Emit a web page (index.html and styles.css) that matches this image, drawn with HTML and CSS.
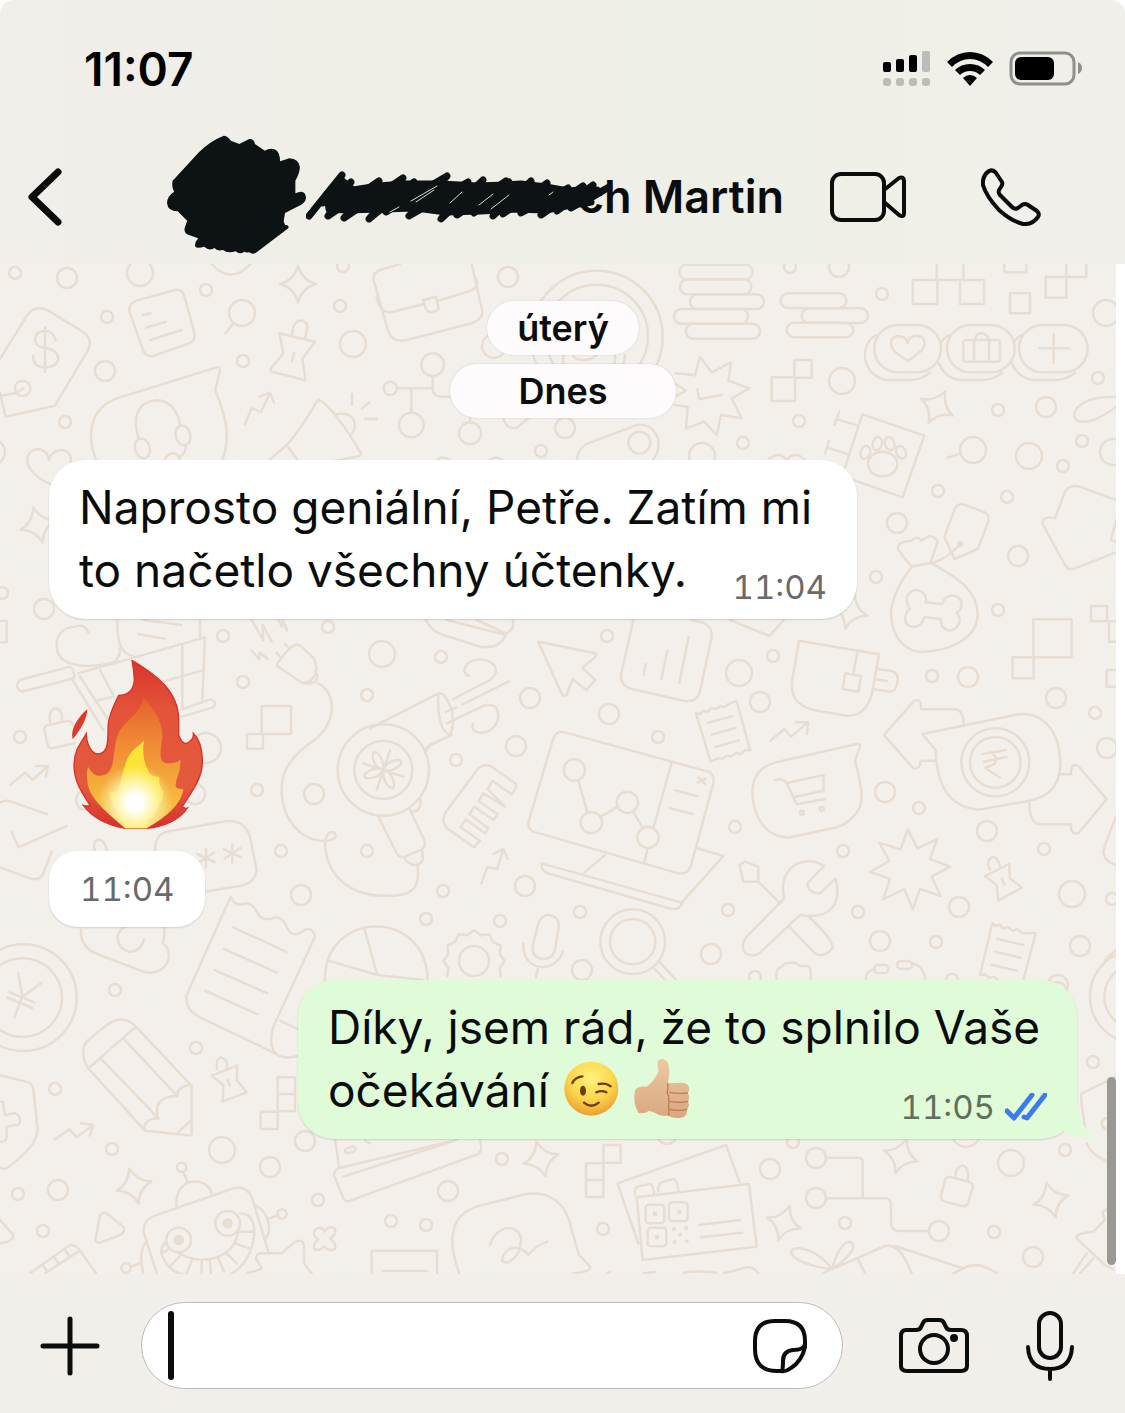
FILE: index.html
```
<!DOCTYPE html>
<html lang="cs">
<head>
    <meta charset="UTF-8">
    <meta name="viewport" content="width=device-width, initial-scale=1.0">
    <title>Chat - Martin</title>
    <link rel="stylesheet" href="styles.css">
</head>
<body>
    <header class="header">
        <div class="status-bar">
            <time class="clock">11:07</time>
            <div class="status-icons">
                <svg width="48" height="36" viewBox="0 0 48 36" aria-label="Signal">
                    <g fill="#000">
                        <rect x="0" y="11" width="8" height="10" rx="2"/>
                        <rect x="13" y="8" width="8" height="13" rx="2"/>
                        <rect x="26" y="4" width="8" height="17" rx="2"/>
                    </g>
                    <g fill="#bcbdb6">
                        <rect x="39" y="0" width="8" height="21" rx="2"/>
                        <rect x="0" y="27" width="8" height="8" rx="3"/>
                        <rect x="13" y="27" width="8" height="8" rx="3"/>
                        <rect x="26" y="27" width="8" height="8" rx="3"/>
                        <rect x="39" y="27" width="8" height="8" rx="3"/>
                    </g>
                </svg>
                <svg width="46" height="34" viewBox="0 0 46 34" aria-label="Wi-Fi">
                    <path d="M0 10Q10 0 23 0T46 10L41 15Q33 7 23 7T5 15ZM8 18Q14 12 23 12T38 18L33 23Q29 19 23 19T13 23ZM16 26Q19 23 23 23T30 26L23 34Z"/>
                </svg>
                <svg width="74" height="36" viewBox="0 0 74 36" aria-label="Battery">
                    <rect x="2" y="2" width="63" height="31" rx="9" fill="none" stroke="#8f908a" stroke-width="3"/>
                    <rect x="6" y="6" width="39" height="23" rx="6"/>
                    <path d="M69 11Q73 13 73 17T69 23Z" fill="#8f908a"/>
                </svg>
            </div>
        </div>
        <nav class="nav-bar">
            <button class="icon-button" aria-label="Zpět">
                <svg width="34" height="58" viewBox="0 0 34 58" class="icon thick"><path d="M30 4L4 29L30 54"/></svg>
            </button>
            <div class="contact">
                <svg class="avatar" width="139" height="119" viewBox="470 403 392 357" preserveAspectRatio="none" aria-hidden="true">
                    <path d="M486 540L560 455Q590 422 630 405Q640 405 650 420L674 430L702 415Q716 414 718 430L746 450Q760 440 776 447Q789 456 789 482L815 473Q842 474 845 500Q843 522 832 540V578Q860 563 862 592Q860 608 840 617L803 637L799 662L803 673Q816 672 812 683L720 757Q710 762 702 755Q690 756 688 753Q675 763 664 752Q640 759 628 748Q610 752 604 742Q590 752 575 738Q555 744 550 738Q546 728 558 713L530 702Q514 695 522 675L527 660L500 632Q472 632 470 607Q470 587 490 573Q482 560 486 540Z" fill="#0d1214"/>
                </svg>
                <div class="name-box">
                    <h1 class="name">ch Martin</h1>
                    <svg class="scribble" width="308" height="52" viewBox="305 173 308 52" aria-hidden="true">
                        <path d="M326 196L340 182L352 192L378 188L402 186L440 186L476 188L505 187L520 186L545 189L567 193L580 192L596 192L570 207L545 212L512 211L480 213L445 214L415 210L380 211L345 212L328 211Z" fill="#0d1214"/>
                        <path d="M308 218L341 177L322 205L350 184L327 218L378 183L343 220L402 180L368 221L413 184L385 214L446 178L408 218L467 184L440 221L482 182L456 217L505 183L473 215L508 184L492 218L530 183L502 216L546 185L520 215L567 190L540 217L582 188L556 213L592 187L570 210L608 189L580 206L590 204"/>
                        <path d="M384 193V214M516 193V214" stroke-linecap="butt" stroke-width="6"/>
                        <path class="gaps" d="M436 188L410 203M433 192L415 204M461 194L449 205M492 196L478 207M508 197L490 211M398 209L389 214M552 194L548 197"/>
                    </svg>
                </div>
            </div>
            <button class="icon-button video" aria-label="Videohovor">
                <svg width="76" height="50" viewBox="0 0 76 50" class="icon">
                    <rect x="2" y="2" width="52" height="46" rx="9"/>
                    <path d="M54 18L69 6Q74 4 74 9V41Q74 46 69 43L54 30"/>
                </svg>
            </button>
            <button class="icon-button" aria-label="Hovor">
                <svg width="60" height="58" viewBox="0 0 60 58" class="icon">
                    <path d="M8 3Q12 1 15 5L21 14Q22 16 20 19L18 22Q17 25 19 27L31 39Q34 42 37 40L41 37Q44 35 47 37L56 43Q59 46 57 49Q51 57 42 56Q30 53 18 42Q5 28 2 17Q1 8 8 3Z"/>
                </svg>
            </button>
        </nav>
    </header>

    <main class="chat">
        <svg class="wallpaper" viewBox="0 264 1116 1010" preserveAspectRatio="xMidYMin slice" aria-hidden="true">
            <defs>
                <path id="sparkle" d="M0-18Q5-3 18 0Q4 4 0 18Q-4 4-18 0Q-5-3 0-18Z"/>
                <path id="asterisk" d="M0-28V28M-26-12L26 12M-24 16L24-16"/>
            </defs>
            <!-- small dots -->
            <g>
                <circle cx="15" cy="273" r="6"/><circle cx="206" cy="290" r="6"/><circle cx="107" cy="317" r="6"/><circle cx="243" cy="361" r="6"/>
                <circle cx="340" cy="306" r="6"/><circle cx="65" cy="422" r="6"/><circle cx="2" cy="593" r="6"/><circle cx="328" cy="627" r="6"/>
                <circle cx="343" cy="266" r="6"/><circle cx="541" cy="451" r="6"/><circle cx="743" cy="443" r="6"/><circle cx="607" cy="636" r="6"/>
                <circle cx="790" cy="267" r="6"/><circle cx="882" cy="294" r="6"/><circle cx="799" cy="421" r="6"/><circle cx="998" cy="410" r="6"/>
                <circle cx="1082" cy="441" r="6"/><circle cx="1063" cy="466" r="6"/><circle cx="1098" cy="378" r="6"/><circle cx="938" cy="491" r="6"/>
                <circle cx="1007" cy="497" r="6"/><circle cx="876" cy="577" r="6"/><circle cx="998" cy="610" r="6"/>
                <circle cx="223" cy="636" r="6"/><circle cx="243" cy="682" r="6"/><circle cx="20" cy="737" r="6"/><circle cx="257" cy="790" r="6"/>
                <circle cx="281" cy="851" r="6"/><circle cx="367" cy="695" r="6"/><circle cx="367" cy="851" r="6"/><circle cx="441" cy="657" r="6"/>
                <circle cx="456" cy="760" r="6"/><circle cx="658" cy="737" r="6"/><circle cx="735" cy="827" r="6"/><circle cx="443" cy="891" r="6"/>
                <circle cx="426" cy="919" r="6"/><circle cx="500" cy="921" r="6"/><circle cx="580" cy="912" r="6"/><circle cx="728" cy="910" r="6"/>
                <circle cx="773" cy="656" r="6"/><circle cx="932" cy="676" r="6"/><circle cx="1095" cy="713" r="6"/><circle cx="919" cy="808" r="6"/>
                <circle cx="843" cy="851" r="6"/><circle cx="1044" cy="849" r="6"/><circle cx="858" cy="912" r="6"/><circle cx="936" cy="942" r="6"/>
                <circle cx="1112" cy="899" r="6"/><circle cx="115" cy="990" r="6"/><circle cx="196" cy="1048" r="6"/><circle cx="55" cy="1089" r="6"/>
                <circle cx="112" cy="1149" r="6"/><circle cx="18" cy="1194" r="6"/><circle cx="43" cy="1231" r="6"/><circle cx="318" cy="1200" r="6"/>
                <circle cx="502" cy="1159" r="6"/><circle cx="391" cy="1221" r="6"/><circle cx="426" cy="1225" r="6"/><circle cx="603" cy="1229" r="6"/>
                <circle cx="755" cy="977" r="6"/><circle cx="952" cy="980" r="6"/><circle cx="1093" cy="1062" r="6"/><circle cx="1065" cy="1150" r="6"/>
                <circle cx="845" cy="1223" r="6"/><circle cx="994" cy="1232" r="6"/><circle cx="793" cy="1142" r="6"/>
            </g>
            <!-- medium dots -->
            <g>
                <circle cx="67" cy="278" r="10"/><circle cx="105" cy="371" r="10"/><circle cx="44" cy="609" r="10"/><circle cx="508" cy="277" r="10"/>
                <circle cx="494" cy="346" r="12"/><circle cx="565" cy="428" r="10"/><circle cx="839" cy="267" r="10"/><circle cx="1046" cy="407" r="10"/>
                <circle cx="897" cy="523" r="10"/><circle cx="1018" cy="556" r="10"/><circle cx="314" cy="794" r="10"/><circle cx="301" cy="895" r="10"/>
                <circle cx="195" cy="794" r="10"/><circle cx="86" cy="800" r="10"/><circle cx="530" cy="698" r="10"/><circle cx="609" cy="714" r="10"/>
                <circle cx="516" cy="746" r="10"/><circle cx="525" cy="886" r="10"/><circle cx="711" cy="954" r="10"/><circle cx="760" cy="702" r="10"/>
                <circle cx="968" cy="677" r="10"/><circle cx="1056" cy="698" r="10"/><circle cx="1107" cy="748" r="10"/><circle cx="885" cy="792" r="10"/>
                <circle cx="987" cy="831" r="10"/><circle cx="959" cy="907" r="10"/><circle cx="880" cy="941" r="10"/><circle cx="1080" cy="946" r="10"/>
                <circle cx="58" cy="1190" r="10"/><circle cx="305" cy="1141" r="10"/><circle cx="270" cy="1167" r="10"/><circle cx="582" cy="970" r="10"/>
                <circle cx="448" cy="1191" r="10"/><circle cx="667" cy="1134" r="10"/><circle cx="1058" cy="985" r="10"/><circle cx="770" cy="1169" r="10"/>
                <circle cx="816" cy="1158" r="10"/><circle cx="816" cy="1198" r="10"/><circle cx="939" cy="1231" r="10"/><circle cx="1033" cy="1257" r="10"/>
            </g>
            <!-- large dots -->
            <g>
                <circle cx="140" cy="273" r="13"/><circle cx="242" cy="313" r="13"/><circle cx="353" cy="344" r="13"/><circle cx="-8" cy="452" r="13"/>
                <circle cx="702" cy="456" r="13"/><circle cx="842" cy="381" r="13"/><circle cx="973" cy="450" r="13"/><circle cx="1029" cy="456" r="13"/>
                <circle cx="1106" cy="313" r="13"/><circle cx="1113" cy="452" r="13"/><circle cx="206" cy="748" r="15"/><circle cx="382" cy="654" r="13"/>
                <circle cx="739" cy="673" r="13"/><circle cx="1072" cy="894" r="13"/><circle cx="222" cy="1150" r="13"/><circle cx="1011" cy="1163" r="13"/>
                <circle cx="966" cy="1133" r="14"/>
            </g>
            <g>
                <use href="#sparkle" x="298" y="284"/>
                <use href="#sparkle" transform="translate(38 525) rotate(-15)"/>
                <use href="#sparkle" transform="translate(937 407) rotate(28)"/>
                <use href="#sparkle" transform="translate(850 611) rotate(15)"/>
                <use href="#sparkle" transform="translate(134 1186) rotate(-15)"/>
                <use href="#sparkle" transform="translate(541 1159) rotate(-15)"/>
                <use href="#sparkle" transform="translate(784 1223) rotate(18)"/>
                <use href="#sparkle" transform="translate(901 1156) rotate(18)"/>
                <use href="#sparkle" transform="translate(1051 1200) rotate(-15)"/>
            </g>
            <!-- price tag, note, pin, headset, megaphone -->
            <g class="doodle" transform="translate(0 260) scale(.33333)">
                <path d="M0 297L82 165Q108 132 145 152L245 213Q282 235 263 272L165 437L17 470L0 400M0 408L50 398L70 385"/>
                <circle cx="68" cy="385" r="23"/>
                <path d="M135 202V335M167 240Q158 212 135 212Q105 214 105 240Q106 260 135 264Q175 270 175 297Q170 322 135 322Q100 322 99 288"/>
                <path d="M410 122L525 90Q545 87 552 105L583 218Q588 240 568 250L462 287Q438 293 430 272L388 155Q385 130 410 122ZM428 165L452 160M438 203L497 186M450 240L545 210"/>
                <path d="M702 188L676 220M838 220L945 245L907 297L916 358Q914 362 905 358L815 335Q808 330 815 322L850 280ZM876 228L880 200Q890 178 908 182Q925 190 922 205L915 235M882 278L876 304"/>
                <path d="M734 494L755 445L783 456L810 398M780 410L810 398L822 428"/>
                <path d="M288 600C260 530 265 440 360 412L650 322Q660 320 660 332L646 388C665 450 700 510 667 600"/>
                <path d="M415 532C395 470 415 425 470 421C510 422 535 455 540 495M557 560Q558 580 540 590M495 600Q500 580 520 580Q535 582 540 598"/>
                <ellipse cx="427" cy="565" rx="22" ry="30" transform="rotate(-15 427 565)"/>
                <ellipse cx="549" cy="526" rx="22" ry="30" transform="rotate(-15 549 526)"/>
                <path d="M808 600L860 555Q900 510 955 418Q1000 440 1083 580Q1083 590 1070 590L1000 603M860 555L893 600M1010 462Q1060 455 1065 495Q1063 520 1050 525M1056 402V434M1086 445L1108 427M1095 476H1128"/>
                <path d="M150 672C100 650 65 610 90 577C115 555 145 575 147 600C155 565 200 560 212 590V605M635 12Q693 76 752 12M0 1083H20V1147H0"/>
            </g>
            <!-- briefcase, coin, books, nodes, burst, key -->
            <g class="doodle" transform="translate(370 260) scale(.33333)">
                <path d="M90 12L30 30Q5 40 12 65L55 215Q70 250 110 240L305 190Q345 175 335 145L305 12M20 110Q30 165 70 155L160 132M205 122L295 95Q325 85 320 60M160 120L198 110L206 145Q200 155 182 157Q165 155 160 120Z"/>
                <circle cx="680" cy="230" r="198"/><circle cx="680" cy="228" r="154"/>
                <path d="M580 285V315M610 290Q620 300 640 300Q665 300 680 285M735 285V315M765 285L760 315"/>
                <rect x="928" y="14" width="220" height="44" rx="22"/><rect x="930" y="58" width="214" height="45" rx="22"/>
                <rect x="960" y="103" width="222" height="44" rx="22"/><rect x="912" y="147" width="222" height="44" rx="22"/>
                <rect x="948" y="191" width="222" height="45" rx="22"/>
                <circle cx="188" cy="314" r="34"/><circle cx="61" cy="385" r="20"/><circle cx="124" cy="495" r="37"/><circle cx="300" cy="520" r="33"/>
                <path d="M82 385H188M124 390V458M188 350V385Q188 410 215 410H245M300 470V487M0 478H20"/>
                <path d="M918 340L975 346L990 290L1025 337L1083 307L1075 362L1138 385L1085 415L1115 475L1053 465L1040 525L1003 485L948 505L953 440L915 435M918 372L948 392L915 410M982 387L988 418L1056 404"/>
                <path d="M620 600Q625 560 660 548L800 495Q850 490 865 540Q868 580 848 600M400 475Q410 510 440 503L475 475M200 600Q218 585 238 600M360 600Q378 585 396 600"/>
                <circle cx="808" cy="548" r="33"/>
            </g>
            <!-- pills, squares, coins, paw sign, bone bag, glove -->
            <g class="doodle" transform="translate(745 260) scale(.33333)">
                <rect x="107" y="100" width="197" height="44" rx="22"/><rect x="170" y="145" width="199" height="44" rx="22"/><rect x="125" y="188" width="200" height="44" rx="22"/>
                <path d="M503 60H577V132H503ZM645 60H717V132H645ZM577 60H645M575 12V60M655 12V60M795 100H855V160H795ZM902 51H964V113H902ZM964 51V12M964 51H1024V12M778 12V37H844V12M80 352H150V423H80ZM148 300H200V353H148Z"/>
                <rect x="388" y="195" width="200" height="142" rx="71"/><rect x="606" y="195" width="203" height="142" rx="71"/><rect x="822" y="195" width="206" height="142" rx="71"/>
                <path d="M395 225C340 250 350 350 425 360H500Q530 358 555 338M582 310Q600 355 645 360H715Q745 358 772 338M590 245Q598 232 612 225M800 310Q820 355 865 360H935Q965 358 990 338M808 245Q816 232 830 225"/>
                <path d="M488 303C450 278 432 265 440 240C455 220 485 228 488 250C492 225 525 220 537 240C545 265 525 278 488 303Z"/>
                <rect x="655" y="240" width="110" height="65" rx="8"/>
                <path d="M687 240V305M732 240V305M690 240Q692 220 710 220Q728 222 730 240M926 222V308M883 265H970"/>
                <path d="M325 660L473 712L538 527L352 463L300 622M268 495L283 456M276 478L340 497M240 580L252 542M246 562L310 583M648 580L608 593"/>
                <ellipse cx="413" cy="612" rx="44" ry="37"/><ellipse cx="361" cy="577" rx="14" ry="20" transform="rotate(20 361 577)"/><ellipse cx="397" cy="551" rx="14" ry="20" transform="rotate(15 397 551)"/>
                <ellipse cx="434" cy="551" rx="14" ry="20" transform="rotate(-15 434 551)"/><ellipse cx="468" cy="577" rx="14" ry="20" transform="rotate(-25 468 577)"/>
                <path d="M70 600Q100 570 125 600Q150 570 180 600M1113 410Q1030 410 1000 440Q975 470 1000 483Q1040 495 1113 440"/>
                <path d="M1113 720L1010 682Q975 670 960 695L930 775Q895 765 892 790L960 915Q970 932 990 925L1113 877M1113 780L1098 840L1113 846"/>
                <path d="M630 745Q640 728 660 735L715 755Q735 765 730 785L698 867L628 897L598 830ZM560 910Q610 895 645 852"/>
                <circle cx="646" cy="852" r="6"/>
                <path d="M500 920L460 870Q452 845 500 842Q515 825 530 842Q560 815 578 845L557 908L500 920Q440 1000 438 1060C440 1150 500 1180 540 1175C640 1170 700 1120 698 1060C695 990 640 955 557 908"/>
                <path d="M542 1027L592 1032C600 995 650 1000 650 1035Q650 1050 635 1058Q650 1080 640 1095C620 1125 585 1110 588 1077L538 1072C530 1110 480 1110 480 1075Q482 1055 495 1047Q478 1020 490 1003C515 975 550 1000 542 1027Z"/>
                <path d="M865 1078H980V1192H865ZM803 1192H866V1255H803ZM1038 1038H1086V1084H1038ZM1088 1084H1113M1092 1088V1145H1113M1113 1230H1085V1280H1113M0 1098L73 1128L117 1080"/>
            </g>
            <!-- shopping cart, plug, lock, password -->
            <g class="doodle" transform="translate(0 620) scale(.33333)">
                <path d="M60 180L210 140Q225 150 222 175L65 215Q40 202 60 180ZM235 160L615 52L607 240M547 75V265M300 150L340 225M480 187L605 152M285 243L340 230M215 175L310 330M240 170L325 300M545 268L630 238Q655 245 640 262L545 290"/>
                <path d="M265 38Q255 10 225 20C170 20 150 85 190 120C240 150 320 135 345 125Q365 100 358 85M352 0C350 70 365 105 400 108M415 43L495 56M430 0L545 15M600 0V50"/>
                <path d="M755 0L790 60L788 15L815 65M835 0L845 20L848 0L862 32M755 92L778 118V97L802 116"/>
                <path d="M875 80Q890 68 905 80L942 115Q955 150 945 165Q930 190 905 188L832 138Q830 125 875 80ZM830 98L845 115M855 72L870 88M945 155Q960 165 945 185Q925 195 910 188"/>
                <path d="M952 188C1010 220 1010 300 950 355C840 430 845 480 845 520C850 600 900 660 970 663Q1015 660 1005 640Q985 625 975 663C975 760 1040 820 1140 827"/>
                <path d="M785 258H873V342H785ZM741 342H789V386H741ZM225 370L155 385Q145 385 143 375L133 330Q133 317 145 315L205 302Q217 303 219 315M150 305Q145 265 170 265Q190 275 185 300"/>
                <path d="M32 494L75 458L98 480L143 438M108 438H143L138 470M0 548Q15 538 35 545L142 583M35 635L55 682L200 618M0 742L90 775Q120 785 130 760L155 695"/>
                <path d="M465 690Q465 645 500 635L680 603Q735 600 750 650L770 750Q765 790 720 798L610 815M285 695Q275 660 300 658Q315 665 320 690"/>
                <use href="#asterisk" x="618" y="714"/><use href="#asterisk" x="697" y="700"/>
            </g>
            <!-- hair dryer, cursor, chart, comb, monitor -->
            <g class="doodle" transform="translate(370 620) scale(.33333)">
                <circle cx="40" cy="450" r="137"/><circle cx="40" cy="450" r="87"/>
                <path d="M0 325L205 220Q225 215 245 270Q255 320 240 345M205 220Q200 320 235 342M165 400Q168 385 180 375L245 345"/>
                <path d="M250 237L360 180Q385 160 375 140C360 110 290 110 283 150Q285 165 297 168M278 253L417 184M230 310L340 258Q385 245 385 290C380 340 320 350 308 325V312M228 275L260 262"/>
                <ellipse cx="68" cy="436" rx="28" ry="12" transform="rotate(-25 68 436)"/><ellipse cx="24" cy="422" rx="28" ry="12" transform="rotate(65 24 422)"/>
                <ellipse cx="10" cy="460" rx="28" ry="12" transform="rotate(-20 10 460)"/><ellipse cx="56" cy="478" rx="28" ry="12" transform="rotate(65 56 478)"/>
                <path d="M60 392L20 510M-20 430L100 470"/>
                <path d="M25 590L80 700Q90 715 105 710L155 688Q168 680 163 660L120 570Q150 585 152 540M103 715Q125 745 150 730Q165 720 155 688M143 740C150 800 130 825 70 827L0 826"/>
                <path d="M505 65L675 100Q682 105 675 112L637 143L675 180L650 210L607 178L590 225Q582 230 575 222Z"/>
                <path d="M790 0L753 165Q750 195 785 207L945 243Q980 248 990 215L1025 50Q1028 20 1000 8L965 0M827 133L821 165M892 92L874 177M956 50L928 188"/>
                <path d="M168 0Q185 35 220 45L330 80Q385 90 408 45L230 0M320 0L408 40Q435 30 428 0M1080 0L1140 25"/>
                <path d="M312 682L235 628Q210 605 228 575L325 445Q345 430 365 440L438 492Q442 500 425 523L368 483L353 507L405 560L340 520L326 543L383 583L370 600L313 560L298 583L355 625L345 640L287 598L272 622L330 662Z"/>
                <path d="M334 790L352 741L382 747L400 687M370 702L400 687L413 716"/>
                <path d="M550 355Q560 330 585 337L1015 455Q1035 465 1030 490L962 740Q950 765 925 760L490 635Q470 625 477 600ZM905 428L852 618M833 685L823 728M625 482L652 577M693 590L740 562M790 577L818 622M915 511L983 529M900 565L968 582M985 473L1005 492M983 488L1006 476"/>
                <circle cx="613" cy="450" r="32"/><circle cx="664" cy="608" r="32"/><circle cx="772" cy="547" r="32"/><circle cx="834" cy="652" r="32"/>
                <path d="M980 684L1060 708L935 848L515 730Q512 755 540 762L905 867Q930 868 938 848M705 705L643 758"/>
                <path d="M1022 425L978 280L990 282L1000 272L1012 275L1024 265L1038 267L1050 258L1064 261L1076 251L1100 243L1140 390L1126 391L1112 402L1098 399L1084 409L1070 407L1058 417L1044 415ZM1015 308L1086 289M1025 344L1096 324M1036 381L1106 361"/>
                <path d="M505 910Q515 885 535 885Q570 890 566 920L555 990Q545 1020 515 1017Q485 1010 488 980Z"/>
            </g>
            <!-- cup, cart bubble, rupee, burst, wrench -->
            <g class="doodle" transform="translate(745 620) scale(.33333)">
                <path d="M162 62L402 103L380 225Q360 290 305 287L205 270Q130 250 142 180ZM337 97L325 162M300 160L348 168L340 215L293 207ZM398 148L440 153Q460 160 458 180Q455 215 435 215L388 208M392 178L425 183"/>
                <path d="M76 362L118 327L138 350L188 307M153 307H190L185 342"/>
                <path d="M345 380L330 422C345 480 360 540 340 570Q315 610 275 622L130 653C60 650 25 590 22 520C22 450 65 435 100 425L335 372Q345 370 345 380ZM90 480Q115 472 125 490L155 553L240 537M130 488L236 465V512L145 532"/>
                <circle cx="171" cy="578" r="6"/><circle cx="230" cy="566" r="6"/>
                <path d="M572 422H527Q525 450 505 445L417 345L508 242Q530 235 528 268H630Q655 270 656 310"/>
                <path d="M532 342L820 283C900 275 945 340 946 430C945 500 910 530 850 543L700 569C600 560 575 480 572 390ZM946 463H978Q978 425 1000 438L1085 538L1000 640Q975 645 978 613H885Q852 610 853 543"/>
                <circle cx="751" cy="427" r="102"/><circle cx="751" cy="427" r="76"/>
                <path d="M712 402L782 390M717 425L785 410M740 397Q775 430 720 443L765 473"/>
                <path d="M488 628L518 685L577 657L555 717L615 740L560 770L587 828L525 807L503 868L478 807L415 838L435 776L375 756L433 723L403 668L467 688Z"/>
                <path d="M720 768L792 732L795 775L830 803L760 842L755 795ZM735 750Q720 720 745 710Q760 715 765 742M770 776L778 793"/>
                <path d="M237 738C180 700 95 740 118 835L5 950Q-15 975 0 998Q25 1015 45 998L165 885C260 900 290 850 272 776L225 820Q190 820 187 790ZM130 918L210 1000Q240 1015 262 985Q270 965 190 888M0 725L40 740V785L103 848M40 785H-5L-17 735L0 725"/>
                <path d="M705 1065L742 910L752 918L764 914L774 926L790 922L802 932L818 928L832 940L872 940L835 1080M705 1065L720 1062L732 1074L746 1070L760 1080M757 957L835 975M750 995L828 1013M740 1034L815 1052M1113 590Q1080 670 1075 695Q1078 725 1113 735M1080 1020L1113 990"/>
            </g>
            <!-- coin, big receipt, pencil, shield, robot -->
            <g class="doodle" transform="translate(0 930) scale(.33333)">
                <path d="M243 0C240 45 270 65 300 75L430 125C490 140 520 90 500 50L487 38Q495 20 492-10M432 30Q420 65 390 65Q355 60 352 20Q360-10 390-15"/>
                <circle cx="70" cy="203" r="160"/><circle cx="68" cy="203" r="118"/>
                <path d="M55 130L67 200L125 158M67 200L43 262M22 203L97 234M30 187L103 217"/>
                <path d="M830 372L600 262Q555 240 560 195L692-100Q705-70 730-78T770-55T815-35T860-10T905 5T945 20L820 290Q805 340 825 370Q850 390 893 378M840 272L893 297M700-8L858 65M672 57L830 128M644 120L802 190M615 182L773 253"/>
                <path d="M975 152C970-60 1280-70 1283 152M1092-8L1132 135L985 92M1132 135L1270 150"/>
                <path d="M250 370Q245 350 265 330L320 285Q370 250 408 290L575 468V610Q575 618 565 616L435 602L265 415Q250 395 250 370ZM265 415L408 290M305 388L475 565M370 325L532 498M432 598Q435 565 475 565Q455 500 532 498Q530 470 570 465M528 612L575 570"/>
                <path d="M0 436L80 455Q98 460 100 480L113 600Q110 650 20 715Q10 718 0 712M0 515L8 515L15 555L45 550Q60 555 60 572Q60 585 45 585L20 590V620Q20 635 0 635"/>
                <path d="M635 437L712 407L710 450L740 487L668 515L670 465ZM652 418Q645 385 665 382Q685 390 680 412M683 450L690 468M833 442H885V544H833ZM833 492H885M782 545H833V597H782Z"/>
                <path d="M162 630L208 598L230 622L280 585M243 580L280 585L270 617"/>
                <circle cx="545" cy="712" r="14"/><circle cx="846" cy="852" r="14"/><circle cx="378" cy="1014" r="14"/>
                <circle cx="536" cy="930" r="37"/><circle cx="536" cy="930" r="12" class="solid"/><circle cx="683" cy="880" r="37"/><circle cx="683" cy="880" r="12" class="solid"/>
                <path d="M550 727L563 757M530 830C520 740 620 735 635 790M470 1030L432 910Q425 870 465 857L700 775Q735 765 755 800L805 965M765 825Q810 850 807 905Q800 925 795 928M807 865L835 855M435 940Q415 970 430 1030M392 1010L420 1000"/>
                <path d="M495 938Q475 965 490 985Q510 1030 560 1035M690 1035C750 1000 770 930 760 880Q750 850 720 850M535 968C600 1010 700 990 715 905M510 955L485 970M545 972L512 1008M578 985L560 1030M605 993V1030M630 993L633 1030M655 985L672 1025M680 970L710 1000M705 940L748 955M715 905H760"/>
                <path d="M300 855Q315 840 330 858L370 890Q378 905 360 915L300 938Q283 938 287 925ZM90 1030L205 948Q220 940 235 955L288 1030M135 1030L235 965M195 960L207 977M163 983L175 1000M130 1008L142 1025M0 870L40 915Q40 935 0 940"/>
                <path d="M740 1030Q780 1020 785 1015L768 985Q770 970 785 970L845 970L885 935Q912 925 912 950L912 1000L935 1030M945 900Q965 885 973 905Q985 885 1005 895Q1010 915 990 925Q1010 940 1005 957Q985 965 973 948Q960 965 942 957Q940 940 955 928Q935 915 945 900Z"/>
                <path d="M1005 630L1017 708M1110 640L1095 632M1040 655L1062 648Q1072 655 1062 665L1040 670Q1030 662 1040 655ZM1370 630L1015 715Q1002 722 1002 735L1030 805Q1035 818 1050 812L1435 672Q1450 660 1440 630M1030 740L1370 630M1115 1030V962H1311V1030M1147 1023H1282"/>
            </g>
            <!-- gear, mic, magnifier, speech, business cards -->
            <g class="doodle" transform="translate(370 930) scale(.33333)">
                <path d="M232 139L235 114L220 93L235 72L232 47L255 36L266 13L291 16L312 1L333 16L358 13L369 36L392 47L389 72L404 93L389 114L392 139"/>
                <circle cx="312" cy="93" r="45"/>
                <path d="M460 40C455 130 560 130 578 65M503 118L498 142M852 115L885 150M870 97L918 150"/>
                <circle cx="788" cy="35" r="97"/><circle cx="788" cy="35" r="68"/>
                <path d="M700 645H752V698H700ZM648 700H700V801H648ZM648 750H700"/>
                <path d="M268 1030C230 930 240 850 330 827L465 793C540 780 590 820 605 900L627 975L660 1010Q665 1025 610 1030M360 945C380 880 450 880 453 930C450 1000 390 1010 397 985C410 945 450 945 475 975Q500 945 532 935"/>
                <path d="M805 940L742 760L1068 645L1110 760M800 802L1137 762L1160 950L818 990ZM795 795Q790 770 810 768L840 762Q850 765 852 790M865 785Q862 760 880 755L910 747Q920 748 925 780M987 885L1110 870M992 922L1117 908"/>
                <rect x="827" y="824" width="56" height="56" rx="10"/><rect x="897" y="817" width="56" height="56" rx="10"/><rect x="833" y="893" width="56" height="56" rx="10"/>
                <path class="solid" d="M852 848H858V854H852ZM925 842H931V848H925ZM858 919H864V925H858ZM910 895H914V899H910ZM947 892H951V896H947ZM929 912H933V916H929ZM912 934H916V938H912ZM948 932H952V936H948Z"/>
                <path d="M710 1030L720 1026M820 1030L855 1026M940 1030Q960 1020 1040 1028M1062 1030L1130 1012Q1150 1010 1165 1030"/>
            </g>
            <!-- circuit, lock, gift bow, push pin -->
            <g class="doodle" transform="translate(745 930) scale(.33333)">
                <path d="M95 148Q90 115 110 110L120 100L150 98L165 108H190Q200 115 197 148M362 148Q365 118 390 118M500 100Q535 105 540 148"/>
                <rect x="387" y="105" width="43" height="24" rx="12"/><rect x="456" y="93" width="45" height="24" rx="12"/>
                <circle cx="1175" cy="200" r="140"/><circle cx="1175" cy="200" r="97"/>
                <path d="M242 683H340Q353 683 353 698V805M242 805H420Q438 805 438 825V880Q440 903 460 903H553"/>
                <path d="M612 740L672 755Q685 760 683 772L670 818Q665 832 650 828L600 815Q585 810 588 798L600 750Q603 740 612 740ZM630 740Q635 705 655 707Q675 715 668 750"/>
                <path d="M262 1018C200 1010 140 990 138 965C150 940 220 960 262 1018C270 980 290 935 315 935C345 950 300 990 262 1018M232 1030L420 948Q440 945 460 960Q480 980 500 1030M340 990L360 1030M450 948L655 1015Q700 990 755 1030M655 1015L625 1030"/>
                <path d="M1113 440L1010 490Q1005 500 1020 590M1025 640Q1040 680 1113 705M1113 565H1080Q1060 580 1080 597H1113M1113 838Q1080 830 1072 850L1080 870L1045 905Q990 910 995 925L1080 1005L1105 1018M1025 970L985 1030M1045 985L1005 1030M915 170A27 27 0 0 1 965 180"/>
            </g>
        </svg>

        <div class="messages">
            <div class="day">úterý</div>
            <div class="day today">Dnes</div>

            <div class="bubble in">
                <p>Naprosto geniální, Petře. Zatím mi to načetlo všechny účtenky.<time class="stamp">11:04</time></p>
            </div>

            <div class="sticker">
                <svg width="131" height="169" viewBox="216 120 393 507" role="img" aria-label="Oheň">
                    <defs>
                        <linearGradient id="fireOrange" x1="0" y1="0" x2="0" y2="1">
                            <stop offset="0" stop-color="#e6602f"/>
                            <stop offset=".35" stop-color="#f08a35"/>
                            <stop offset=".7" stop-color="#f4b03c"/>
                            <stop offset="1" stop-color="#f8cf45"/>
                        </linearGradient>
                        <linearGradient id="fireRed" x1="0" y1="0" x2="0" y2="1">
                            <stop offset="0" stop-color="#d8352a"/>
                            <stop offset=".3" stop-color="#e4543a"/>
                            <stop offset=".75" stop-color="#e35a3c"/>
                            <stop offset="1" stop-color="#d8302c"/>
                        </linearGradient>
                        <radialGradient id="fireGlow" gradientUnits="userSpaceOnUse" cx="405" cy="548" r="115">
                            <stop offset=".2" stop-color="#fff"/>
                            <stop offset=".55" stop-color="#fffbd0" stop-opacity=".7"/>
                            <stop offset="1" stop-color="#fdf0a0" stop-opacity="0"/>
                        </radialGradient>
                        <path id="fireInner" d="M430 232C470 280 488 310 487 350C480 400 475 430 505 430Q535 430 541 418C545 450 525 480 527 500Q536 510 550 506C545 560 480 600 440 625H375C340 590 262 540 262 480Q258 460 264 440C280 465 290 470 310 466C350 455 335 390 355 340C380 295 425 280 430 232Z"/>
                    </defs>
                    <path d="M261 268Q264 300 218 358Q208 318 261 268Z" fill="#dc3a2c"/>
                    <path d="M396 121C470 165 536 215 536 300V345Q545 372 560 370Q582 360 580 340C600 360 608 390 607 430C606 480 570 520 547 560Q556 567 562 564C540 600 490 620 440 625H375C320 615 275 590 250 556Q262 560 270 556C240 510 222 480 222 435C222 390 245 365 259 341C260 375 275 402 295 402C330 400 322 350 325 310C330 275 345 250 356 226Q400 225 403 180Q402 150 396 121Z" fill="url(#fireRed)" stroke="#d8302c" stroke-width="4"/>
                    <use href="#fireInner" fill="url(#fireOrange)"/>
                    <path d="M432 362C425 400 435 440 450 462Q462 472 478 470Q475 490 490 515C490 555 450 580 440 625H375C370 590 335 560 328 516Q345 520 355 512C365 480 370 440 385 410C400 385 420 375 432 362Z" fill="#fbe435"/>
                    <use href="#fireInner" fill="url(#fireGlow)"/>
                </svg>
            </div>
            <div class="bubble in only-time"><time>11:04</time></div>

            <div class="bubble out">
                <p>Díky, jsem rád, že to splnilo Vaše očekávání
                    <svg class="emoji" width="55" height="60" viewBox="578 385 165 180" role="img" aria-label="Mrknutí">
                        <defs>
                            <radialGradient id="face" cx=".5" cy=".3" r=".75">
                                <stop offset="0" stop-color="#fff27a"/>
                                <stop offset=".55" stop-color="#fbd54c"/>
                                <stop offset="1" stop-color="#eb9528"/>
                            </radialGradient>
                        </defs>
                        <circle cx="660" cy="474" r="81" fill="url(#face)"/>
                        <ellipse cx="635" cy="480" rx="9" ry="15" fill="#6b3f12"/>
                        <path d="M603 457Q610 440 633 437M682 460Q705 456 718 467M675 485Q692 478 705 485M638 516Q660 535 682 516" fill="none" stroke="#6b3f12" stroke-width="7" stroke-linecap="round"/>
                    </svg>
                    <svg class="emoji" width="56" height="60" viewBox="783 387 167 180" role="img" aria-label="Palec nahoru">
                        <defs>
                            <linearGradient id="skin" x1="0" y1="0" x2="0" y2="1">
                                <stop offset="0" stop-color="#ecc9a3"/>
                                <stop offset="1" stop-color="#dba77f"/>
                            </linearGradient>
                        </defs>
                        <path d="M786 480Q795 467 820 470Q842 455 856 425Q850 395 856 390Q872 382 884 398Q893 425 884 460L925 458Q948 460 948 475Q949 485 943 489Q953 500 944 515Q952 528 941 538Q945 560 920 564Q895 566 885 556Q865 562 845 548L828 542Q815 552 796 549Q778 520 786 480Z" fill="url(#skin)"/>
                        <path d="M884 460Q885 475 882 490Q890 500 886 510Q890 520 886 530Q890 545 886 556M890 487Q915 492 943 489M890 514Q915 519 944 515M890 538Q915 544 941 538" fill="none" stroke="#b97e58" stroke-width="4" stroke-linecap="round"/>
                    </svg><span class="stamp"><time>11:05</time>
                        <svg width="42" height="28" viewBox="0 0 42 28" class="ticks" role="img" aria-label="Přečteno"><path d="M2 18L9 25L27 2M19 24L22 25L40 2"/></svg>
                    </span></p>
                <svg class="tail" width="38" height="52" viewBox="0 0 38 52" aria-hidden="true"><path d="M20 0Q21 38 38 49Q20 52 8 43L0 30V0Z"/></svg>
            </div>
        </div>
        <div class="scroll-thumb"></div>
    </main>

    <footer class="composer">
        <button class="icon-button" aria-label="Přidat">
            <svg width="60" height="60" viewBox="0 0 60 60" class="icon medium"><path d="M30 3V57M3 30H57"/></svg>
        </button>
        <div class="field">
            <span class="caret"></span>
            <input type="text" class="field-input" aria-label="Zpráva">
            <button class="icon-button" aria-label="Nálepka">
                <svg width="56" height="56" viewBox="0 0 56 56" class="icon">
                    <path d="M27 53Q3 54 3 31V23Q3 3 23 3H33Q53 3 53 23V29Q50 43 39 50Q34 54 29 53ZM30 53Q31 50 31 43Q31 33 41 32Q52 32 53 26"/>
                </svg>
            </button>
        </div>
        <button class="icon-button camera" aria-label="Fotoaparát">
            <svg width="70" height="56" viewBox="0 0 70 56" class="icon">
                <path d="M7 12H17Q21 12 22 9L24 5Q25 2 29 2H40Q44 2 45 5L47 9Q48 12 52 12H62Q68 12 68 18V48Q68 53 62 53H8Q2 53 2 48V18Q2 12 7 12Z"/>
                <circle cx="35" cy="31" r="14"/><circle cx="55" cy="20" r="2" fill="#0b0d0d"/>
            </svg>
        </button>
        <button class="icon-button" aria-label="Hlasová zpráva">
            <svg width="48" height="70" viewBox="0 0 48 70" class="icon">
                <rect x="13" y="2" width="22" height="45" rx="11"/>
                <path d="M2 36Q3 58 24 58T46 36M24 58V68"/>
            </svg>
        </button>
    </footer>
</body>
</html>
```
FILE: styles.css
```
* {
    box-sizing: border-box;
}

body {
    font-family: Inter, "Noto Sans", sans-serif;
    margin: 0;
    min-height: 100vh;
    display: flex;
    flex-direction: column;
    background-color: #fff;
    color: #0b0d0d;
}

svg {
    display: block;
}

p {
    margin: 0;
}

.icon-button {
    padding: 0;
    border: none;
    background: none;
    cursor: pointer;
    flex: none;
}

.icon {
    fill: none;
    stroke: #0b0d0d;
    stroke-width: 4;
    stroke-linecap: round;
    stroke-linejoin: round;
}

.icon.medium {
    stroke-width: 5;
}

.icon.thick {
    stroke-width: 7;
}

/* header */
.header {
    border-radius: 14px 14px 0 0;
    background: linear-gradient(90deg, #f2eeea, #efeee7 35%, #eeefe6 60%, #f1efea);
}

.status-bar {
    display: flex;
    justify-content: space-between;
    align-items: center;
    height: 138px;
    padding: 0 42px 0 84px;
}

.clock {
    font-size: 46px;
    font-weight: 600;
    color: #000;
}

.status-icons {
    display: flex;
    align-items: center;
    gap: 16px;
}

.nav-bar {
    display: flex;
    align-items: center;
    height: 126px;
    padding: 0 84px 8px 28px;
}

.contact {
    flex: 1;
    display: flex;
    justify-content: flex-end;
    align-items: center;
    margin-right: 46px;
}

.avatar {
    flex: none;
    margin-bottom: 6px;
}

.name-box {
    position: relative;
    width: 478px;
}

.name {
    margin: 0;
    font-size: 45px;
    line-height: 52px;
    font-weight: 600;
    text-align: right;
}

.scribble {
    position: absolute;
    top: 0;
    left: 0;
    fill: none;
    stroke: #0d1214;
    stroke-width: 7;
    stroke-linecap: round;
    stroke-linejoin: round;
}

.gaps {
    stroke: #d9dad3;
    stroke-width: 1;
}

.video {
    margin-right: 75px;
}

/* chat */
.chat {
    position: relative;
    flex: 1;
    margin-right: 9px;
    background-color: #f3f0eb;
}

.wallpaper {
    position: absolute;
    top: 0;
    left: 0;
    width: 100%;
    height: 100%;
    fill: none;
    stroke: #e8ddd2;
    stroke-width: 2.5;
    stroke-linecap: round;
    stroke-linejoin: round;
}

.doodle {
    stroke-width: 7.5;
}

.solid {
    fill: #e8ddd2;
}

.messages {
    position: relative;
    display: flex;
    flex-direction: column;
    align-items: flex-start;
    padding: 37px 39px 135px 49px;
}

.day {
    align-self: center;
    min-width: 152px;
    height: 54px;
    margin-bottom: 9px;
    border-radius: 27px;
    background-color: #fdfbfc;
    box-shadow: 0 0 2px rgba(0, 0, 0, 0.15);
    font-size: 36px;
    line-height: 54px;
    font-weight: 600;
    text-align: center;
}

.today {
    min-width: 226px;
    margin-bottom: 42px;
}

.bubble {
    position: relative;
    padding: 16px 30px 17px;
    border-radius: 36px;
    box-shadow: 0 1px 2px rgba(0, 0, 0, 0.14);
    font-size: 46px;
    line-height: 63px;
}

.in {
    max-width: 808px;
    background-color: #fff;
}

.out {
    align-self: flex-end;
    max-width: 779px;
    background-color: #dffbd7;
}

.stamp,
.only-time {
    font-size: 33px;
    line-height: 30px;
    font-variant-numeric: tabular-nums;
    color: #6a6a6a;
}

.stamp {
    float: right;
    display: flex;
    align-items: center;
    gap: 10px;
    margin-top: 33px;
}

.out .stamp {
    color: #5f6f5b;
}

.ticks {
    fill: none;
    stroke: #3b7bea;
    stroke-width: 5;
    stroke-linecap: round;
    stroke-linejoin: round;
}

.only-time {
    padding: 23px 31px;
    border-radius: 28px;
    margin-bottom: 53px;
}

.sticker {
    margin: 41px 0 22px 23px;
}

.emoji {
    display: inline-block;
    vertical-align: middle;
    margin: -16px 0 -6px 2px;
}

.tail {
    position: absolute;
    right: -17px;
    bottom: -1px;
    fill: #dffbd7;
}

.scroll-thumb {
    position: absolute;
    right: 0;
    bottom: 9px;
    width: 9px;
    height: 188px;
    border-radius: 5px;
    background-color: #9b9793;
}

/* composer */
.composer {
    display: flex;
    align-items: center;
    padding: 28px 51px 24px 40px;
    background-color: #f2eee9;
}

.field {
    flex: 1;
    display: flex;
    align-items: center;
    min-width: 0;
    height: 87px;
    margin: 0 56px 0 41px;
    padding: 0 34px 0 26px;
    border: 1px solid #bdbdbd;
    border-radius: 44px;
    background-color: #fff;
}

.caret {
    flex: none;
    width: 6px;
    height: 69px;
    border-radius: 3px;
    background-color: #0b0d0d;
}

.field-input {
    flex: 1;
    min-width: 0;
    padding: 0 12px;
    border: none;
    outline: none;
    background: none;
    font-family: inherit;
    font-size: 46px;
}

.camera {
    margin-right: 57px;
}
```
